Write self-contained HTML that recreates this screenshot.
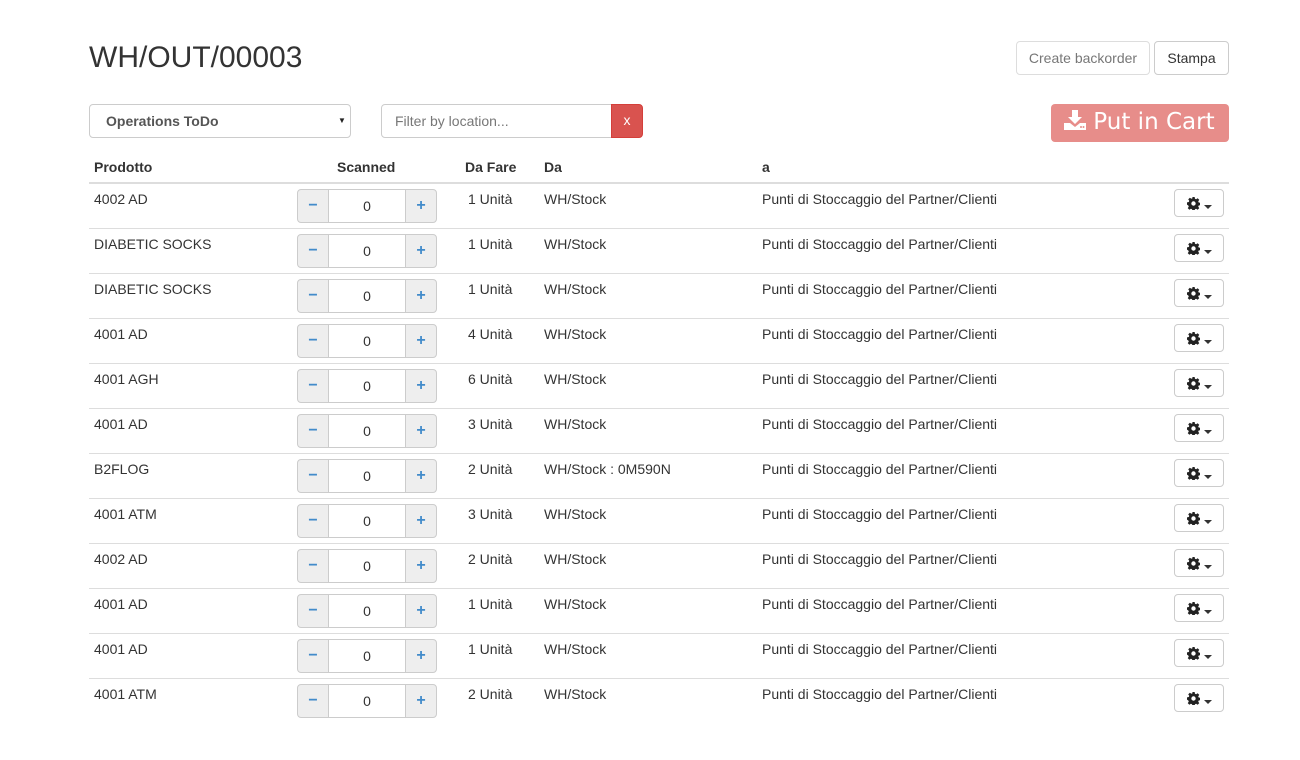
<!DOCTYPE html>
<html><head><meta charset="utf-8"><style>
*{box-sizing:border-box}
body{margin:0;background:#fff;font-family:"Liberation Sans",sans-serif;font-size:14px;color:#333;width:1300px;height:760px;overflow:hidden;position:relative}
.abs{position:absolute}
h1{position:absolute;left:89px;top:40px;margin:0;font-size:30px;font-weight:400;line-height:36px;color:#333}
.btn{position:absolute;border:1px solid #ccc;border-radius:4px;background:#fff;font-size:14px;text-align:center;line-height:32px;height:34px}
.hd{position:absolute;top:158px;font-weight:bold;line-height:18px}
.hl{position:absolute;left:89px;top:182px;width:1140px;height:2px;background:#ddd}
.row{position:absolute;left:89px;width:1140px;height:45px;border-bottom:1px solid #ddd}
.row:last-child{border-bottom:none}
.row .c{position:absolute;top:6px;line-height:18px}
.ig{position:absolute;left:208px;top:5px;display:flex;width:140px;height:34px}
.ig span{display:block;height:34px;line-height:32px;text-align:center;border:1px solid #ccc}
.ig .m{width:32px;background:#eee;border-radius:4px 0 0 4px;color:#428bca;font-weight:bold;font-size:16px}
.ig .v{width:76px;border-left:none;border-right:none}
.ig .p{width:32px;background:#eee;border-radius:0 4px 4px 0;color:#428bca;font-weight:bold;font-size:16px}
.g{position:absolute;left:1085px;top:5px;width:50px;height:28px;border:1px solid #ccc;border-radius:4px}
.g svg{position:absolute;left:12px;top:7px}
.g i{position:absolute;left:29px;top:15px;border-top:4px solid #333;border-left:4px solid transparent;border-right:4px solid transparent}
</style></head><body>
<h1>WH/OUT/00003</h1>
<div class="btn" style="left:1016px;top:41px;width:134px;color:#777;border-color:#ddd">Create backorder</div>
<div class="btn" style="left:1154px;top:41px;width:75px;color:#333">Stampa</div>
<div class="abs" style="left:89px;top:104px;width:262px;height:34px;border:1px solid #ccc;border-radius:4px;font-weight:bold;color:#555;line-height:32px;padding-left:16px">Operations ToDo<span style="position:absolute;left:248px;top:0;font-size:8px;color:#222">▼</span></div>
<div class="abs" style="left:381px;top:104px;width:231px;height:34px;border:1px solid #ccc;border-radius:4px 0 0 4px;color:#777;line-height:32px;padding-left:13px">Filter by location...</div>
<div class="abs" style="left:611px;top:104px;width:32px;height:34px;background:#d9534f;border:1px solid #d43f3a;border-radius:0 4px 4px 0;color:#fff;text-align:center;line-height:31px">x</div>
<div class="abs" style="left:1051px;top:104px;width:178px;height:38px;background:#e78d8a;border-radius:4px;color:#fff;font-family:'DejaVu Sans',sans-serif;font-size:23px;line-height:37px;padding-left:13px;white-space:nowrap">
<svg width="22" height="22" viewBox="0 0 22 22" style="vertical-align:-2px"><path d="M8 1h6v7h4l-7 7-7-7h4z" fill="#fff"/><path d="M0 14h6l5 4 5-4h6v7H0z" fill="#fff"/><circle cx="17" cy="18" r="1" fill="#e78d8a"/><circle cx="19.5" cy="18" r="1" fill="#e78d8a"/></svg> Put in Cart</div>
<div class="hd" style="left:94px">Prodotto</div>
<div class="hd" style="left:337px">Scanned</div>
<div class="hd" style="left:465px">Da Fare</div>
<div class="hd" style="left:544px">Da</div>
<div class="hd" style="left:762px">a</div>
<div class="hl"></div>
<div id="b"></div>
<script>
var r=[["4002 AD","1","WH/Stock"],["DIABETIC SOCKS","1","WH/Stock"],["DIABETIC SOCKS","1","WH/Stock"],["4001 AD","4","WH/Stock"],["4001 AGH","6","WH/Stock"],["4001 AD","3","WH/Stock"],["B2FLOG","2","WH/Stock : 0M590N"],["4001 ATM","3","WH/Stock"],["4002 AD","2","WH/Stock"],["4001 AD","1","WH/Stock"],["4001 AD","1","WH/Stock"],["4001 ATM","2","WH/Stock"]];
var gear='<svg width="13" height="13" viewBox="0 0 16 16"><path fill="#222" d="M6.6 0h2.8l.4 2.2 1.4.6 1.9-1.3 2 2-1.3 1.9.6 1.4 2.2.4v2.8l-2.2.4-.6 1.4 1.3 1.9-2 2-1.9-1.3-1.4.6-.4 2.2H6.6l-.4-2.2-1.4-.6-1.9 1.3-2-2 1.3-1.9-.6-1.4L0 9.4V6.6l2.2-.4.6-1.4-1.3-1.9 2-2 1.9 1.3 1.4-.6zM8 5.3a2.7 2.7 0 1 0 0 5.4 2.7 2.7 0 0 0 0-5.4z"/></svg>';
var h="";r.forEach(function(x,i){h+='<div class="row" style="top:'+(184+45*i)+'px"><div class="c" style="left:5px">'+x[0]+'</div><div class="ig"><span class="m">−</span><span class="v">0</span><span class="p">+</span></div><div class="c" style="left:379px">'+x[1]+' Unità</div><div class="c" style="left:455px">'+x[2]+'</div><div class="c" style="left:673px">Punti di Stoccaggio del Partner/Clienti</div><div class="g">'+gear+'<i></i></div></div>'});
document.getElementById("b").innerHTML=h;
</script>
</body></html>
